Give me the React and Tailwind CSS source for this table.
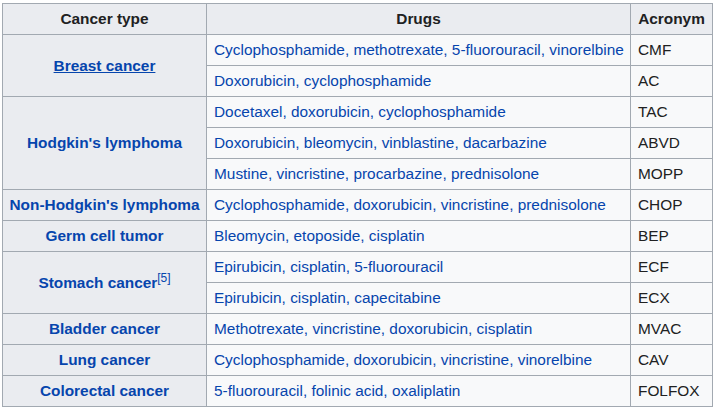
const rows = [
  { type: 'Breast cancer', span: 2, underline: true, drugs: 'Cyclophosphamide, methotrexate, 5-fluorouracil, vinorelbine', acr: 'CMF' },
  { drugs: 'Doxorubicin, cyclophosphamide', acr: 'AC' },
  { type: "Hodgkin's lymphoma", span: 3, drugs: 'Docetaxel, doxorubicin, cyclophosphamide', acr: 'TAC' },
  { drugs: 'Doxorubicin, bleomycin, vinblastine, dacarbazine', acr: 'ABVD' },
  { drugs: 'Mustine, vincristine, procarbazine, prednisolone', acr: 'MOPP' },
  { type: "Non-Hodgkin's lymphoma", span: 1, drugs: 'Cyclophosphamide, doxorubicin, vincristine, prednisolone', acr: 'CHOP' },
  { type: 'Germ cell tumor', span: 1, drugs: 'Bleomycin, etoposide, cisplatin', acr: 'BEP' },
  { type: 'Stomach cancer', span: 2, note: '[5]', drugs: 'Epirubicin, cisplatin, 5-fluorouracil', acr: 'ECF' },
  { drugs: 'Epirubicin, cisplatin, capecitabine', acr: 'ECX' },
  { type: 'Bladder cancer', span: 1, drugs: 'Methotrexate, vincristine, doxorubicin, cisplatin', acr: 'MVAC' },
  { type: 'Lung cancer', span: 1, drugs: 'Cyclophosphamide, doxorubicin, vincristine, vinorelbine', acr: 'CAV' },
  { type: 'Colorectal cancer', span: 1, drugs: '5-fluorouracil, folinic acid, oxaliplatin', acr: 'FOLFOX' },
];

export default function App() {
  return (
    <div className="min-h-screen bg-white pt-[3px] pl-[2px]" style={{ fontFamily: '"Liberation Sans", Arial, sans-serif' }}>
      <table className="border-collapse border border-[#a2a9b1] text-[15.4px] leading-[20px] text-[#202122] table-fixed w-[710px]">
        <colgroup>
          <col className="w-[204px]" />
          <col className="w-[424px]" />
          <col className="w-[82px]" />
        </colgroup>
        <thead>
          <tr className="h-[31px]">
            <th className="border border-[#a2a9b1] bg-[#eaecf0] px-[6px] py-0 font-bold text-center">Cancer type</th>
            <th className="border border-[#a2a9b1] bg-[#eaecf0] px-[6px] py-0 font-bold text-center">Drugs</th>
            <th className="border border-[#a2a9b1] bg-[#eaecf0] px-[6px] py-0 font-bold text-center">Acronym</th>
          </tr>
        </thead>
        <tbody>
          {rows.map((r, i) => (
            <tr key={i} className="h-[31px]">
              {r.type && (
                <th rowSpan={r.span} className="border border-[#a2a9b1] bg-[#eaecf0] px-[6px] py-0 font-bold text-center whitespace-nowrap">
                  <a href="#" className={`text-[#0645ad] ${r.underline ? 'underline' : 'no-underline'}`}>{r.type}</a>
                  {r.note && <span className="relative -top-[6px] text-[12px] font-normal text-[#0645ad] leading-none">{r.note}</span>}
                </th>
              )}
              <td className="border border-[#a2a9b1] bg-[#f8f9fa] px-[7px] py-0 text-left text-[#0645ad] whitespace-nowrap">{r.drugs}</td>
              <td className="border border-[#a2a9b1] bg-[#f8f9fa] px-[7px] py-0 text-left">{r.acr}</td>
            </tr>
          ))}
        </tbody>
      </table>
    </div>
  );
}
